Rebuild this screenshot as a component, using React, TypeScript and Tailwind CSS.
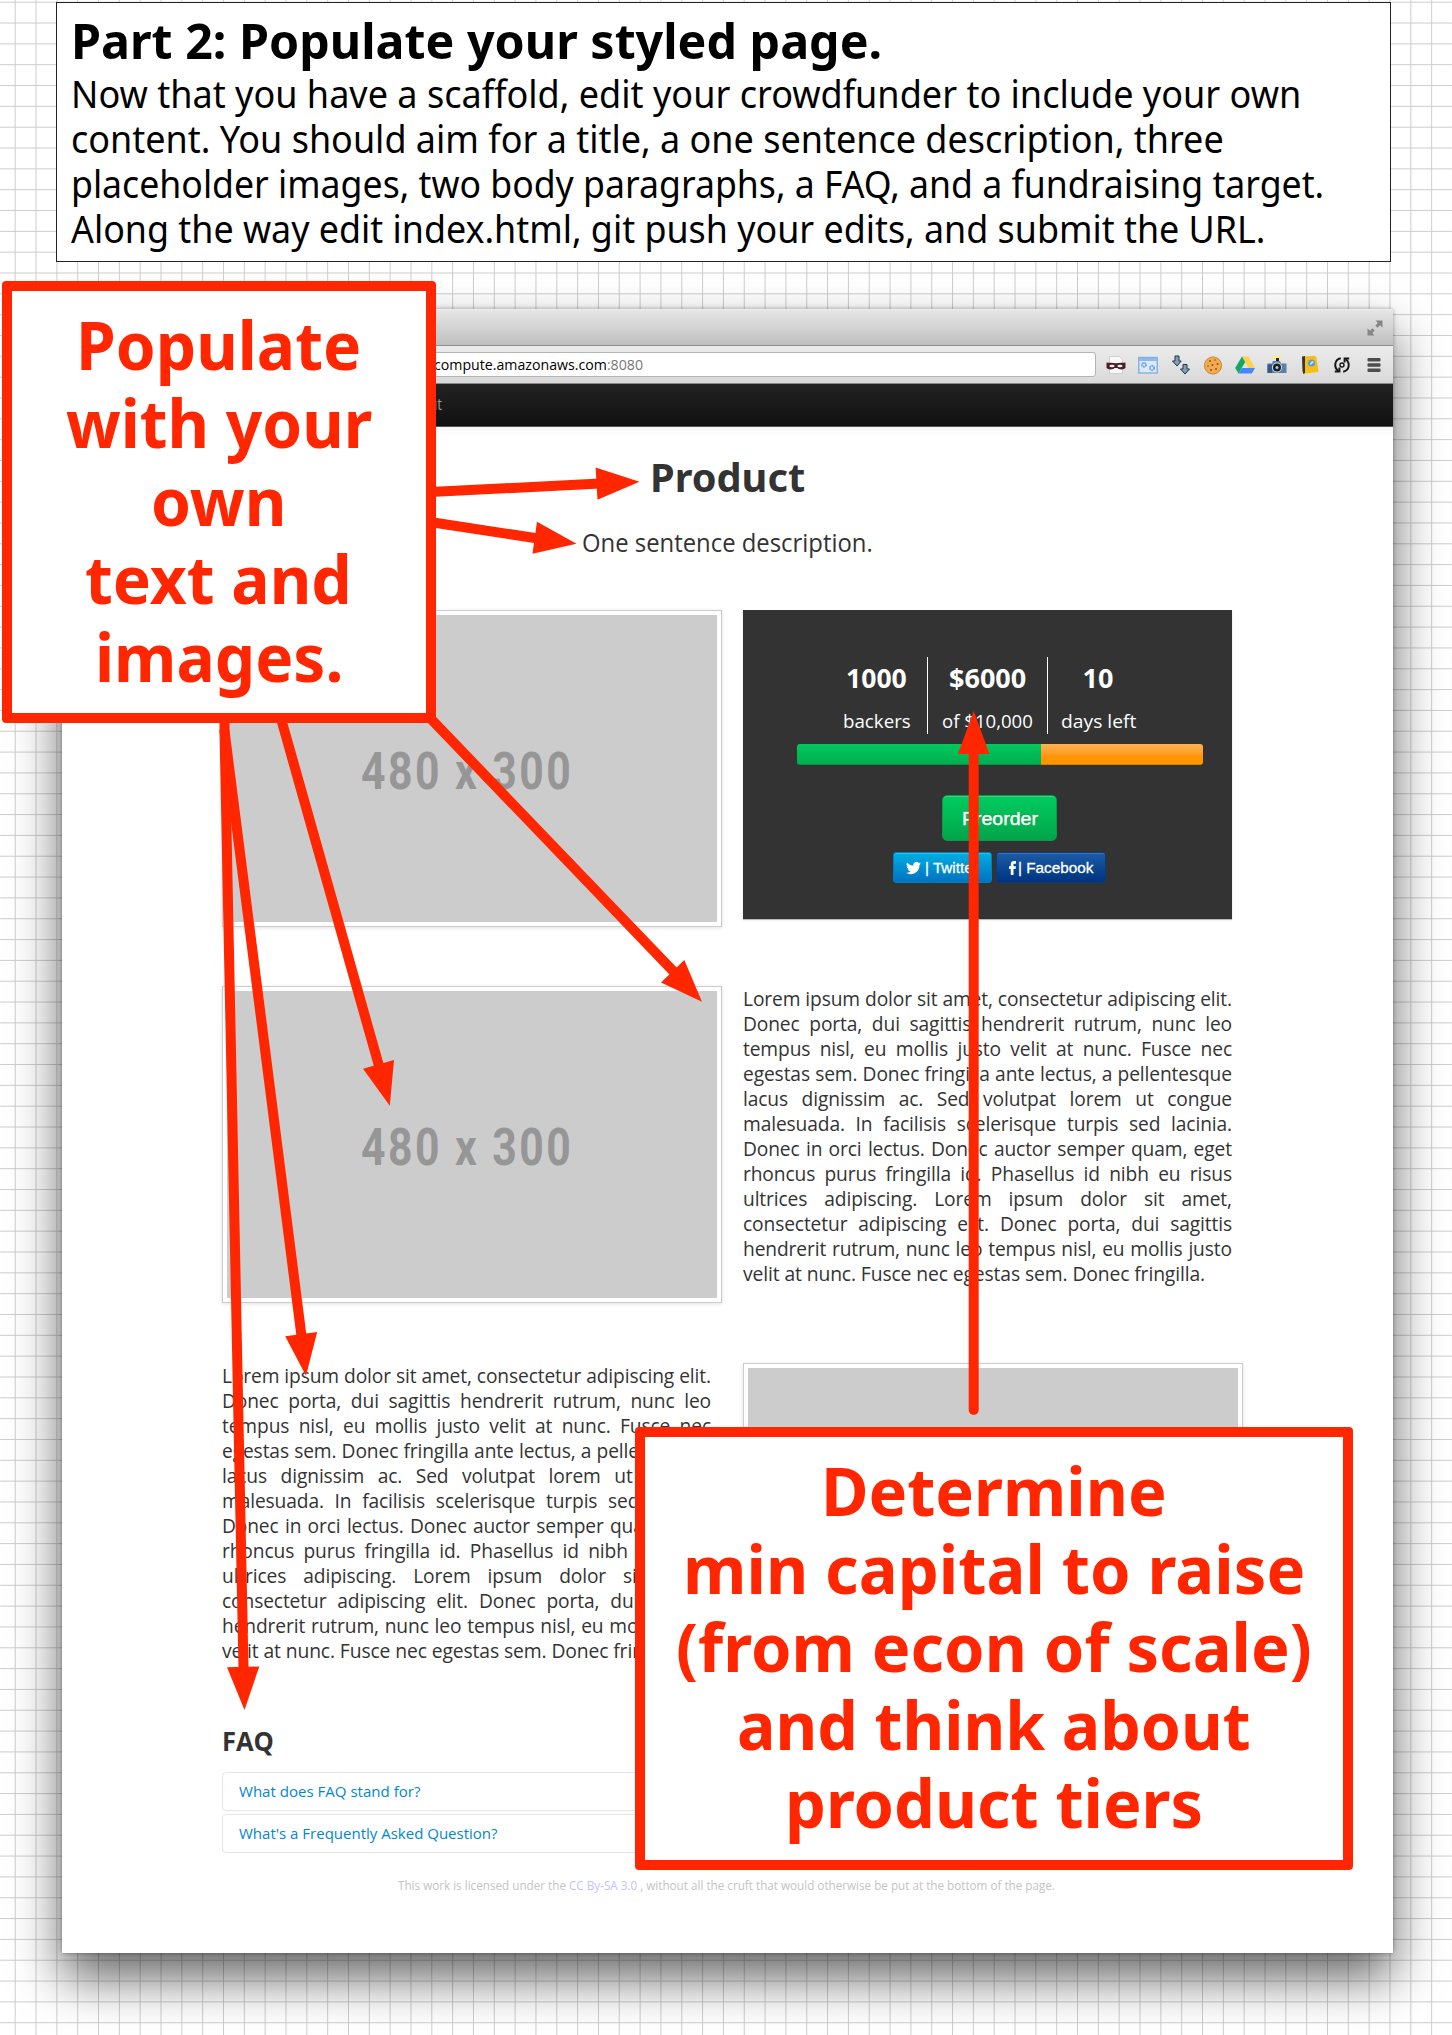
import { useLayoutEffect, useRef, useState } from "react";
import type { ReactNode } from "react";

/** A single line of text, condensed or widened to fill the box given by className. */
function Fit({ className, children }: { className: string; children: ReactNode }) {
  const box = useRef<HTMLSpanElement>(null);
  const text = useRef<HTMLSpanElement>(null);
  const [scale, setScale] = useState(1);
  useLayoutEffect(() => {
    if (box.current && text.current) {
      setScale(box.current.clientWidth / text.current.offsetWidth);
    }
  }, []);
  return (
    <span ref={box} className={"block " + className}>
      <span
        ref={text}
        className="inline-block origin-left whitespace-nowrap align-top"
        style={{ transform: `scaleX(${scale})` }}
      >
        {children}
      </span>
    </span>
  );
}

const LOREM = [
  "Lorem ipsum dolor sit amet, consectetur adipiscing elit.",
  "Donec porta, dui sagittis hendrerit rutrum, nunc leo",
  "tempus nisl, eu mollis justo velit at nunc. Fusce nec",
  "egestas sem. Donec fringilla ante lectus, a pellentesque",
  "lacus dignissim ac. Sed volutpat lorem ut congue",
  "malesuada. In facilisis scelerisque turpis sed lacinia.",
  "Donec in orci lectus. Donec auctor semper quam, eget",
  "rhoncus purus fringilla id. Phasellus id nibh eu risus",
  "ultrices adipiscing. Lorem ipsum dolor sit amet,",
  "consectetur adipiscing elit. Donec porta, dui sagittis",
  "hendrerit rutrum, nunc leo tempus nisl, eu mollis justo",
];

function Paragraph() {
  return (
    <div className="h-[316px] w-[489px] text-[19.200px] leading-[25px] tracking-[-0.120px] text-[#333]">
      {LOREM.map((line) => (
        <div key={line} className="flex justify-between whitespace-nowrap">
          {line.split(" ").map((word, i) => (
            <span key={i}>{word}</span>
          ))}
        </div>
      ))}
      <Fit className="w-[462px]">velit at nunc. Fusce nec egestas sem. Donec fringilla.</Fit>
    </div>
  );
}

function Thumbnail() {
  return (
    <div className="h-[317px] w-[500px] border border-[#ccc] bg-white p-1 shadow-[0_1px_4px_rgba(0,0,0,0.12)]">
      <div className="flex h-[307px] w-[490px] justify-center bg-[#ccc] pt-[127px] pr-[11px] font-['Roboto'] text-[52px] leading-[60px] font-bold tracking-[3px] text-[#969696]">
        <Fit className="w-[212px]">480 x 300</Fit>
      </div>
    </div>
  );
}

function Funding() {
  return (
    <div className="h-[309px] w-[489px] bg-[#333] pt-[47px] text-white shadow-[0_1px_1px_#bbb]">
      <div className="flex h-[77px] pl-[85px] text-center">
        <div className="flex w-[100px] flex-col items-center border-r border-white pt-[2px] pr-[2px]">
          <Fit className="h-[37px] w-[61px] text-[27px] leading-[37px] font-bold">1000</Fit>
          <Fit className="mt-[13px] w-[68px] text-[19px] leading-[24px]">backers</Fit>
        </div>
        <div className="flex w-[120px] flex-col items-center border-r border-white pt-[2px]">
          <Fit className="h-[37px] w-[77px] text-[27px] leading-[37px] font-bold">$6000</Fit>
          <Fit className="mt-[13px] w-[91px] text-[19px] leading-[24px]">of $10,000</Fit>
        </div>
        <div className="flex w-[100px] flex-col items-center pt-[2px]">
          <Fit className="h-[37px] w-[31px] text-[27px] leading-[37px] font-bold">10</Fit>
          <Fit className="mt-[13px] w-[75px] text-[19px] leading-[24px]">days left</Fit>
        </div>
      </div>
      <div className="mt-[10px] ml-[54px] flex h-[21px] w-[406px] overflow-hidden rounded-[3px]">
        <div className="w-[244px] bg-linear-to-b from-[#00c95f] to-[#00ad4e] shadow-[inset_0_-1px_0_rgba(0,0,0,0.15)]" />
        <div className="flex-1 bg-linear-to-b from-[#fbb450] from-0% via-[#ff9500] via-60% to-[#ff9500] shadow-[inset_0_-1px_0_rgba(0,0,0,0.15)]" />
      </div>
      <div className="mt-[30px] ml-[199px] flex h-[46px] w-[115px] justify-center rounded-[5px] border border-[#0a9a49] bg-linear-to-b from-[#00cc60] to-[#02a54a] pt-[11px] font-['Liberation_Sans'] text-[19px] leading-[23px] [text-shadow:0_-1px_0_rgba(0,0,0,0.25)] shadow-[inset_0_1px_0_rgba(255,255,255,0.2)] [-webkit-text-stroke:0.4px_white]">
        <Fit className="w-[76px]">Preorder</Fit>
      </div>
      <div className="mt-[11px] ml-[150px] flex gap-1 font-['Liberation_Sans'] text-[15.5px] leading-[18px] [-webkit-text-stroke:0.3px_white]">
        <div className="flex h-[31px] w-[99px] items-center rounded-[3px] border border-[#0080b8] bg-linear-to-b from-[#00aee2] to-[#0072c1] pl-[12px] shadow-[inset_0_1px_0_rgba(255,255,255,0.2)]">
          <svg viewBox="0 0 24 24" className="mr-[4px] h-[16px] w-[15px] fill-white">
            <path d="M24 4.6a10 10 0 0 1-2.8.8 5 5 0 0 0 2.1-2.7 10 10 0 0 1-3.1 1.2 4.9 4.9 0 0 0-8.4 4.5A14 14 0 0 1 1.7 3.2a4.9 4.9 0 0 0 1.5 6.5 5 5 0 0 1-2.2-.6 5 5 0 0 0 4 4.9 5 5 0 0 1-2.3.1 4.9 4.9 0 0 0 4.6 3.4A9.9 9.9 0 0 1 0 19.5a14 14 0 0 0 21.5-12.4A10 10 0 0 0 24 4.6z" />
          </svg>
          <Fit className="w-[53px]">| Twitter</Fit>
        </div>
        <div className="flex h-[31px] w-[110px] items-center rounded-[3px] border border-[#0a3a80] bg-linear-to-b from-[#1c5ca6] to-[#003380] pl-[12px] shadow-[inset_0_1px_0_rgba(255,255,255,0.15)]">
          <svg viewBox="0 0 12 24" className="mr-[2px] h-[14px] w-[7px] fill-white">
            <path d="M3 24V13.5H0V9h3V6c0-4 2-6 5.500-6H12v4.500H9.500C8 4.500 7.700 5.200 7.700 6.500V9H12l-.6 4.500H7.700V24z" />
          </svg>
          <Fit className="w-[75px]">| Facebook</Fit>
        </div>
      </div>
    </div>
  );
}

function ToolbarIcons() {
  return (
    <div className="flex flex-1 items-center justify-between pr-[9px] pl-[10px]">
      <svg width="20" height="20" viewBox="0 0 20 20">
        <path d="M3.500 1.500h10l3 3v14h-13z" fill="#f8f8f8" stroke="#c8c8c8" strokeWidth=".8" />
        <path d="M.5 7.500c3 .3 6 .2 9.500.8 3.500-.6 6.500-.5 9.500-.8v5.500c-1.500 1.800-6.500 2-8 0h-3c-1.500 2-6.500 1.800-8 0z" fill="#4a2024" />
        <ellipse cx="6" cy="11" rx="2.600" ry="1.300" fill="#f3eeee" />
        <ellipse cx="14" cy="11" rx="2.600" ry="1.300" fill="#f3eeee" />
      </svg>
      <svg width="20" height="20" viewBox="0 0 20 20">
        <rect x=".8" y="2.500" width="18.400" height="15.500" fill="#dbeafa" stroke="#7fabdf" strokeWidth="1.300" />
        <rect x="1" y="2.800" width="18" height="3.200" fill="#8cb8ea" />
        <circle cx="6" cy="9.800" r="2" fill="none" stroke="#6b9edb" strokeWidth="1.800" strokeDasharray="1.600 .6" />
        <circle cx="14" cy="13" r="2.200" fill="none" stroke="#6b9edb" strokeWidth="1.800" strokeDasharray="1.600 .6" />
      </svg>
      <svg width="20" height="20" viewBox="0 0 20 20" fill="#7c9fbd" stroke="#26333f" strokeWidth="1">
        <path d="M4 1h4v5h2.200L6 11 1.500 6H4z" />
        <path d="M12 9.500h4V14h2.500L14 19l-4.500-5H12z" />
      </svg>
      <svg width="20" height="20" viewBox="0 0 20 20">
        <circle cx="10" cy="10.500" r="8.600" fill="#f0aa50" stroke="#d28535" strokeWidth="1" />
        <g fill="#8a4a18">
          <circle cx="7" cy="6" r=".9" />
          <circle cx="12" cy="5" r=".8" />
          <circle cx="14.500" cy="9" r=".9" />
          <circle cx="9.500" cy="10" r=".9" />
          <circle cx="5" cy="11" r=".8" />
          <circle cx="8" cy="15" r=".9" />
          <circle cx="13" cy="14" r=".9" />
        </g>
      </svg>
      <svg width="20" height="20" viewBox="0 0 20 20">
        <path d="M7 1.500h6.500L20 13h-6.500z" fill="#ffd04b" />
        <path d="M7 1.500 10.200 7 3.500 18.500.2 13z" fill="#11a861" />
        <path d="M6.800 13H20l-3.200 5.500H3.500z" fill="#4387fd" />
      </svg>
      <svg width="20" height="20" viewBox="0 0 20 20">
        <path d="M6 1l3 1 2-1.500L14 1l-1 3.500H7z" fill="#fff06a" />
        <path d="M9 3h3v3H9z" fill="#222" />
        <path d="M.5 8.500h4.500l1-2.500h7l1 2.500h5.500V18H.5z" fill="#5b7fa6" />
        <path d="M.5 9.500H5V18H.5z" fill="#335a86" />
        <circle cx="10" cy="12.500" r="5" fill="#d8dfe6" />
        <circle cx="10" cy="12.500" r="4" fill="#1b1f26" />
        <circle cx="10" cy="12.500" r="1.500" fill="#b9c6da" />
      </svg>
      <svg width="20" height="20" viewBox="0 0 20 20">
        <path d="M2 1.500 5 1v17l-1.500 1.300L2.500 16z" fill="#3a3428" />
        <path d="M5 1.500 15 .8l1.500 2L18.500 17 5 18.500z" fill="#f6bd12" />
        <circle cx="11.500" cy="8" r="3.600" fill="#5b9bd8" />
        <path d="M9.500 9.500 12 6l2 1-3 2.500z" fill="#d9ecfa" />
      </svg>
      <svg width="20" height="20" viewBox="0 0 20 20" fill="none" stroke="#161616" strokeWidth="2">
        <path d="M8.800 3.200C2.500 4.500 1.500 12 6.200 15.800" />
        <path d="M2.800 16.600h4.600v-4.200" />
        <path d="M11.200 16.800c6.300-1.300 7.300-8.800 2.600-12.600" />
        <path d="M17.200 3.400h-4.600v4.200" />
        <circle cx="10" cy="10" r="2" strokeWidth="1.400" />
      </svg>
      <svg width="20" height="20" viewBox="0 0 20 20" fill="#4d4d4f">
        <rect x="3.500" y="3" width="13" height="3.400" rx="1" />
        <rect x="3.500" y="8.300" width="13" height="3.400" rx="1" />
        <rect x="3.500" y="13.600" width="13" height="3.400" rx="1" />
      </svg>
    </div>
  );
}

function BrowserWindow() {
  return (
    <div className="mt-[47px] ml-[62px] h-[1644px] w-[1331px] overflow-hidden rounded-t-[4px] bg-white">
      <div className="flex h-[37px] items-center justify-end border-t border-b border-t-[#eee] border-b-[#8f8f8f] bg-linear-to-b from-[#e6e6e6] to-[#bfbfbf] pr-[10px]">
        <svg width="16" height="16" viewBox="0 0 16 16" fill="#858585">
          <path d="M8.500.5h7v7L13 5.200 10.500 7.700 8.300 5.500 10.800 3z" />
          <path d="M7.500 15.500h-7v-7L3 10.800l2.500-2.500 2.200 2.200L5.200 13z" />
        </svg>
      </div>
      <div className="flex h-[38px] items-center border-b border-[#8a8a8a] bg-linear-to-b from-[#ececec] to-[#d9d9d9]">
        <div className="h-[25px] w-[1034px] rounded-r-[3px] border border-[#b4b4b4] bg-white pl-[371px] text-[14.500px] leading-[23px] text-black">
          <Fit className="w-[209px]">
            compute.amazonaws.com<span className="text-[#777]">:8080</span>
          </Fit>
        </div>
        <ToolbarIcons />
      </div>
      <div className="h-[43px] border-b border-[#555] bg-linear-to-b from-[#222] to-[#111] pl-[342px] text-[16px] leading-[40px] text-[#999]">
        <Fit className="w-[38px]">About</Fit>
      </div>
      <div className="h-[25px] bg-linear-to-b from-[#f7f7f7] to-white to-40%" />
      <div className="flex flex-col items-center text-[#333]">
        <Fit className="w-[155px] font-['Noto_Sans'] text-[40px] leading-[50px] font-bold">Product</Fit>
        <Fit className="mt-[23px] w-[291px] text-[25.500px] leading-[34px]">One sentence description.</Fit>
      </div>
      <div className="mt-[51px] grid grid-cols-[521px_500px] pl-[160px]">
        <div className="h-[376px]">
          <Thumbnail />
        </div>
        <Funding />
        <div className="h-[377px]">
          <Thumbnail />
        </div>
        <Paragraph />
        <Paragraph />
        <Thumbnail />
      </div>
      <div className="mt-[44px] ml-[160px] w-[1010px]">
        <Fit className="w-[52px] text-[26px] leading-[34px] font-bold text-[#333]">FAQ</Fit>
        <div className="mt-[14px] flex flex-col gap-[3px] text-[15.300px] leading-[22px] text-[#0088cc]">
          <div className="h-[39px] rounded-[4px] border border-[#e5e5e5] pt-[7px] pl-[16px]">
            <Fit className="w-[181px]">What does FAQ stand for?</Fit>
          </div>
          <div className="h-[39px] rounded-[4px] border border-[#e5e5e5] pt-[7px] pl-[16px]">
            <Fit className="w-[259px]">What's a Frequently Asked Question?</Fit>
          </div>
        </div>
      </div>
      <div className="mt-[25px] flex justify-center pr-[2px] text-[12px] leading-[16px] text-[#c4c4c4]">
        <Fit className="w-[657px]">
          This work is licensed under the <span className="text-[#c2c2ff]">CC By-SA 3.0</span> , without all the cruft that would
          otherwise be put at the bottom of the page.
        </Fit>
      </div>
    </div>
  );
}

function Arrows() {
  return (
    <svg className="absolute top-0 left-0" width="1452" height="2035" viewBox="0 0 1452 2035" fill="#ff2600">
      <g stroke="#ff2600" strokeWidth="10" strokeLinecap="round" fill="none">
        <path d="M430 492 600 483.600" />
        <path d="M430 522 538 538.500" />
        <path d="M432 720 674 972" />
        <path d="M280 715 379 1066" />
        <path d="M224.500 715V731L301.500 1336" />
        <path d="M224.500 731 243.500 1668" />
        <path d="M973.700 1410V752" />
      </g>
      <path d="M639.500 481.700 595.600 467.500 597.500 499.700z" />
      <path d="M576.500 543.700 537 521.700 532.500 553.700z" />
      <path d="M702 1001.700 684.300 960 661 982.500z" />
      <path d="M389.800 1105.700 394 1060 363 1068.700z" />
      <path d="M306 1375.700 317.200 1332 285.200 1336.300z" />
      <path d="M244.500 1710 259.300 1666.500 227 1667.300z" />
      <path d="M973.700 711 989.500 754H958z" />
    </svg>
  );
}

export default function App() {
  return (
    <div className="relative flex h-[2035px] w-[1452px] flex-col overflow-hidden bg-white bg-[repeating-linear-gradient(to_right,transparent_0,transparent_14.200px,#cdcdcd_15.200px,transparent_16.200px,transparent_20.830px),repeating-linear-gradient(to_bottom,transparent_0,transparent_1.200px,#cdcdcd_2.200px,transparent_3.200px,transparent_20.830px)] font-['Open_Sans',sans-serif]">
      <div className="absolute top-[309px] left-[62px] h-[1644px] w-[1331px] rounded-[4px] shadow-[0_25px_50px_rgba(0,0,0,0.6),0_0_4px_rgba(0,0,0,0.35)]" />
      <header className="relative mt-[2px] ml-[56px] h-[260px] w-[1335px] shrink-0 border border-[#222] bg-white pt-[8px] pl-[14px] font-['Noto_Sans'] text-[38px] leading-[45px] text-black">
        <h1 className="h-[60px] text-[49px] leading-[59px] font-bold">
          <Fit className="w-[811px]">Part 2: Populate your styled page.</Fit>
        </h1>
        <Fit className="w-[1230px]">Now that you have a scaffold, edit your crowdfunder to include your own</Fit>
        <Fit className="w-[1153px]">content. You should aim for a title, a one sentence description, three</Fit>
        <Fit className="w-[1253px]">placeholder images, two body paragraphs, a FAQ, and a fundraising target.</Fit>
        <Fit className="w-[1194px]">Along the way edit index.html, git push your edits, and submit the URL.</Fit>
      </header>
      <div className="relative">
        <BrowserWindow />
      </div>
      <Arrows />
      <div className="absolute top-[281px] left-[2px] flex h-[442px] w-[434px] flex-col items-center rounded-[4px] border-10 border-[#ff2600] bg-white pt-[14px] pr-[1px] font-['Noto_Sans'] text-[66px] leading-[78px] font-bold text-[#ff2600]">
        <Fit className="w-[285px]">Populate</Fit>
        <Fit className="w-[306px]">with your</Fit>
        <Fit className="w-[135px]">own</Fit>
        <Fit className="w-[267px]">text and</Fit>
        <Fit className="w-[248px]">images.</Fit>
      </div>
      <div className="absolute top-[1427px] left-[635px] flex h-[443px] w-[718px] flex-col items-center rounded-[4px] border-10 border-[#ff2600] bg-white pt-[14px] pr-[1px] font-['Noto_Sans'] text-[66px] leading-[78px] font-bold text-[#ff2600]">
        <Fit className="w-[346px]">Determine</Fit>
        <Fit className="w-[622px]">min capital to raise</Fit>
        <Fit className="w-[636px]">(from econ of scale)</Fit>
        <Fit className="w-[514px]">and think about</Fit>
        <Fit className="w-[418px]">product tiers</Fit>
      </div>
    </div>
  );
}
